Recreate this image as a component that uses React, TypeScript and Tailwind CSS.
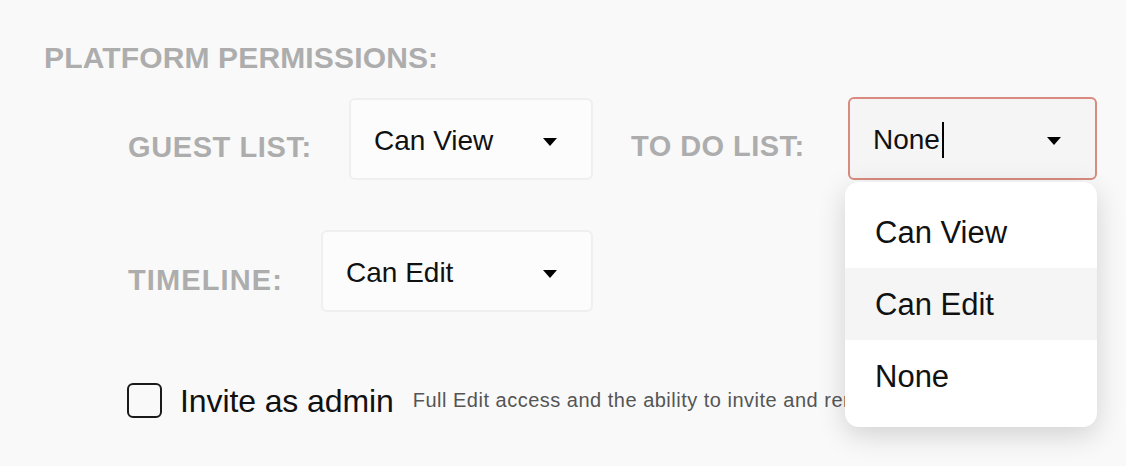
import React from "react";

function Arrow() {
  return (
    <svg width="14" height="8" viewBox="0 0 14 8" className="mt-[2px] shrink-0">
      <path d="M0 0 L14 0 L7 8 Z" fill="#000" />
    </svg>
  );
}

function Select({
  value,
  widthClass,
  focused,
}: {
  value: string;
  widthClass: string;
  focused?: boolean;
}) {
  return (
    <div
      className={
        focused
          ? `${widthClass} h-[83px] rounded-[6px] border-2 border-[#d98b7f] bg-[#f5f5f5] flex items-center justify-between pl-[23px] pr-[34px] pt-[3px]`
          : `${widthClass} h-[82px] rounded-[6px] border-2 border-[#efefef] bg-[#fcfcfc] flex items-center justify-between pl-[23px] pr-[34px] pt-[3px]`
      }
    >
      <div className="flex items-center">
        <span className="text-[28px] leading-[32px] text-[#111]">{value}</span>
        {focused && <span className="ml-[2px] w-[2px] h-[36px] bg-black" />}
      </div>
      <Arrow />
    </div>
  );
}

export default function App() {
  return (
    <div
      className="relative w-[1126px] h-[466px] overflow-hidden bg-[#f9f9f9]"
      style={{ fontFamily: '"Liberation Sans", Arial, sans-serif' }}
    >
      <div className="pt-[40px] pl-[44px]">
        <div className="text-[30px] leading-[36px] font-bold text-[#adadad] tracking-[0.15px]">
          PLATFORM PERMISSIONS:
        </div>
      </div>

      <div className="mt-[22px] pl-[128px] flex items-start">
        <div className="w-[221px] mt-[32px] text-[29px] leading-[34px] font-bold text-[#adadad] tracking-[0.6px]">
          GUEST LIST:
        </div>
        <Select value="Can View" widthClass="w-[244px]" />
        <div className="w-[255px] pl-[38px] mt-[32px] text-[29px] leading-[34px] font-bold text-[#adadad] tracking-[0.45px] -translate-y-[1px]">
          TO DO LIST:
        </div>
        <div className="-mt-[1px]">
          <Select value="None" widthClass="w-[249px]" focused />
        </div>
      </div>

      <div className="mt-[50px] pl-[128px] flex items-start">
        <div className="w-[193px] mt-[33px] text-[29px] leading-[34px] font-bold text-[#adadad] tracking-[1.1px]">
          TIMELINE:
        </div>
        <Select value="Can Edit" widthClass="w-[272px]" />
      </div>

      <div className="mt-[71px] pl-[127px] flex items-start">
        <div className="w-[35px] h-[35px] border-2 border-[#1a1a1a] rounded-[6px] shrink-0" />
        <div className="ml-[18px] text-[32px] leading-[36px] text-[#111] whitespace-nowrap tracking-[-0.1px]">
          Invite as admin
        </div>
        <div className="ml-[19px] mt-[5px] w-[432px] overflow-hidden text-[20px] leading-[24px] text-[#555] tracking-[0.5px] whitespace-nowrap">
          Full Edit access and the ability to invite and remove guests
        </div>
      </div>

      <div className="absolute left-[845px] top-[182px] w-[252px] h-[245px] rounded-[14px] bg-white shadow-[0_8px_28px_rgba(0,0,0,0.16)] pt-[14px] overflow-hidden">
        {["Can View", "Can Edit", "None"].map((o) => (
          <div
            key={o}
            className={
              o === "Can Edit"
                ? "h-[72px] flex items-center pl-[30px] pt-[2px] bg-[#f5f5f5]"
                : "h-[72px] flex items-center pl-[30px] pt-[2px]"
            }
          >
            <span className="text-[31px] leading-[36px] text-[#111]">{o}</span>
          </div>
        ))}
      </div>
    </div>
  );
}
